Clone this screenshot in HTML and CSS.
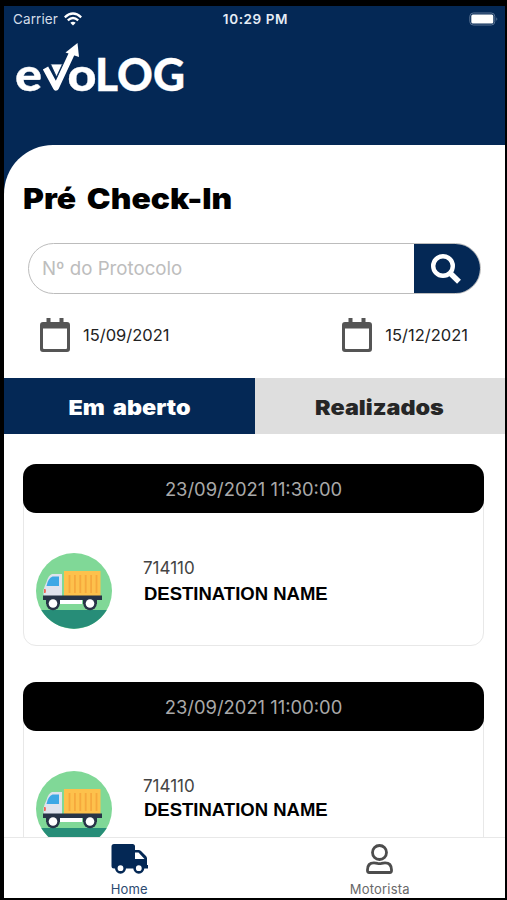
FILE: index.html
```html
<!DOCTYPE html>
<html lang="pt-BR">
<head>
  <meta charset="UTF-8" />
  <meta name="viewport" content="width=device-width, initial-scale=1.0" />
  <title>evoLOG - Pré Check-In</title>
  <link rel="stylesheet" href="styles.css">
</head>
<body>
  <svg class="sprite" aria-hidden="true">
    <symbol id="calendar" viewBox="0 0 30 35">
      <path d="M6.500 0h4v5h-4zM19.500 0h4v5h-4z" fill="#555" />
      <path d="M3 4h24a3 3 0 0 1 3 3v24a3 3 0 0 1-3 3H3a3 3 0 0 1-3-3V7a3 3 0 0 1 3-3zM3 10.500V30q0 1 1 1h22q1 0 1-1V10.500z" fill="#555" fill-rule="evenodd" />
    </symbol>
    <symbol id="truck" viewBox="0 0 76 76">
      <circle cx="38" cy="38" r="38" fill="#80d897" />
      <path d="M5.300 57h65.400a38 38 0 0 1-65.400 0z" fill="#278d78" />
      <path d="M24 43h22v8H24z" fill="#fff" />
      <path d="M28 18h36.500v25H28z" fill="#fdc14c" />
      <path d="M33.500 22v18M38.900 22v18M44.300 22v18M49.700 22v18M55.100 22v18M60.500 22v18" stroke="#f6a83c" stroke-width="1.800" />
      <path d="M16 21h10v22H7.500V37q1-4 3-8 2-7 5.500-8z" fill="#dfe3ed" />
      <path d="M16.500 23.500H23V33H10.500q1.500-8 6-9.500z" fill="#3da8e5" />
      <path d="M8 36h1.500q1 2 0 4H8z" fill="#f0695a" />
      <path d="M7 42.500h59V47H7z" fill="#273447" />
      <path d="M10 46h14v5H10zM47 46h14v5H47z" fill="#273447" />
      <circle cx="17" cy="50.500" r="6.800" fill="#273447" />
      <circle cx="54" cy="50.500" r="6.800" fill="#273447" />
      <circle cx="17" cy="50.500" r="4.300" fill="#fff" />
      <circle cx="54" cy="50.500" r="4.300" fill="#fff" />
    </symbol>
  </svg>

  <div class="screen">
    <header class="header">
      <div class="status-bar">
        <div class="carrier">
          <span>Carrier</span>
          <svg width="18" height="14" viewBox="0 0 18 14" fill="none" stroke="#fff" stroke-width="2.300">
            <path d="M.8 5.300Q9-2.200 17.200 5.300" />
            <path d="M3.800 8.400Q9 3.600 14.200 8.400" />
            <path d="M9 13.500L6.300 10.800Q9 8.500 11.700 10.800z" fill="#fff" stroke="none" />
          </svg>
        </div>
        <span class="time">10:29 PM</span>
        <svg class="battery" width="30" height="14" viewBox="0 0 30 14">
          <rect x=".8" y="1" width="25" height="12" rx="3.500" fill="none" stroke="#5a7394" />
          <rect x="2.300" y="2.500" width="22" height="9" rx="1.500" fill="#fff" />
          <path d="M27.300 5.200q2 1.800 0 3.600z" fill="#5a7394" />
        </svg>
      </div>

      <svg class="logo" width="170" height="54" viewBox="0 0 170 54" role="img" aria-label="evoLOG">
        <g class="logo-text">
          <text x="-1" y="48" font-size="46" textLength="27" lengthAdjust="spacingAndGlyphs">e</text>
          <text x="51.500" y="48" font-size="46" textLength="29" lengthAdjust="spacingAndGlyphs">o</text>
          <text x="79" y="47.500" font-size="45" textLength="90" lengthAdjust="spacingAndGlyphs">LOG</text>
        </g>
        <path d="M29.500 25L40 44.500 56.500 9" fill="none" stroke="#fff" stroke-width="6" stroke-linejoin="round" />
        <path d="M61.500 0L49.500 9.500l13.500 4.500z" fill="#fff" />
        <path d="M34.500 21h12l-6 13z" fill="#fff" stroke="#042855" stroke-width=".8" />
      </svg>
    </header>

    <main class="content">
      <h1><span>Pré Check-In</span></h1>

      <form class="search">
        <input type="text" name="protocolo" placeholder="Nº do Protocolo" />
        <button type="button" aria-label="Buscar">
          <svg width="30" height="30" viewBox="0 0 30 30" fill="none" stroke="#fff">
            <circle cx="12" cy="12" r="9.800" stroke-width="4.400" />
            <path d="M19 19l9 8.700" stroke-width="5.500" />
          </svg>
        </button>
      </form>

      <div class="dates">
        <div class="date">
          <svg width="30" height="35"><use href="#calendar" /></svg>
          <span>15/09/2021</span>
        </div>
        <div class="date">
          <svg width="30" height="35"><use href="#calendar" /></svg>
          <span>15/12/2021</span>
        </div>
      </div>

      <div class="tabs">
        <div class="tab active"><span>Em aberto</span></div>
        <div class="tab"><span>Realizados</span></div>
      </div>

      <div class="list">
        <div class="card">
          <div class="card-header">23/09/2021 11:30:00</div>
          <div class="card-body">
            <svg width="76" height="76"><use href="#truck" /></svg>
            <div class="info">
              <span class="code">714110</span>
              <span class="name">DESTINATION NAME</span>
            </div>
          </div>
        </div>
        <div class="card">
          <div class="card-header">23/09/2021 11:00:00</div>
          <div class="card-body">
            <svg width="76" height="76"><use href="#truck" /></svg>
            <div class="info tight">
              <span class="code">714110</span>
              <span class="name">DESTINATION NAME</span>
            </div>
          </div>
        </div>
      </div>
    </main>

    <nav class="bottom-nav">
      <div class="nav-item active">
        <svg width="37" height="30" viewBox="0 0 37 30">
          <path d="M3 0h18.500a2.500 2.500 0 0 1 2.500 2.500V6h3.500q1.500 0 2.500 1l5 5q1 1 1 2.500v6.500h1v3.500H3A2.500 2.500 0 0 1 .5 22V2.500A2.500 2.500 0 0 1 3 0zM24 8.500V15h9.500L27.500 8.500z" fill="#042855" fill-rule="evenodd" />
          <circle cx="9.500" cy="24.200" r="4.200" fill="#fff" stroke="#042855" stroke-width="2.600" />
          <circle cx="27.800" cy="24.200" r="4.200" fill="#fff" stroke="#042855" stroke-width="2.600" />
        </svg>
        <span>Home</span>
      </div>
      <div class="nav-item">
        <svg width="27" height="30" viewBox="0 0 27 30" fill="none" stroke="#4d4d4d" stroke-width="2.800">
          <circle cx="13.500" cy="8.500" r="7" />
          <path d="M8 18.800q2 0 3.500.5 2 .6 4 0 1.500-.5 3.500-.5 6.500 0 6.500 7v1q0 1.700-1.700 1.700H3.200q-1.700 0-1.700-1.700v-1q0-7 6.500-7z" />
        </svg>
        <span>Motorista</span>
      </div>
    </nav>
  </div>
</body>
</html>
```

FILE: styles.css
```css
* {
  box-sizing: border-box;
}

body {
  margin: 0;
  padding: 6px 2px 2px 4px;
  height: 900px;
  background-color: #000;
  font-family: 'Inter', sans-serif;
  overflow: hidden;
}

svg {
  display: block;
  flex-shrink: 0;
}

.sprite {
  display: none;
}

.screen {
  display: flex;
  flex-direction: column;
  width: 501px;
  height: 892px;
  background-color: #042855;
  overflow: hidden;
}

.header {
  flex: 0 0 139px;
  color: #fff;
}

.status-bar {
  display: grid;
  grid-template-columns: 1fr auto 1fr;
  align-items: center;
  height: 25px;
  padding: 0 6px 0 9px;
  font-size: 13.5px;
}

.carrier {
  display: flex;
  align-items: center;
  gap: 6px;
  letter-spacing: 0.1px;
  color: #d3dce8;
}

.time {
  margin-left: -1px;
  font-weight: 600;
  letter-spacing: 0.6px;
  color: #e6edf5;
}

.battery {
  justify-self: end;
}

.logo {
  margin: 12px 0 0 12px;
  overflow: visible;
}

.logo-text {
  font-family: 'Lato', sans-serif;
  font-weight: 900;
  fill: #fff;
  stroke: #fff;
  stroke-width: 0.3px;
}

.content {
  flex: 1;
  min-height: 0;
  background-color: #fff;
  border-top-left-radius: 49px;
  overflow: hidden;
}

h1 {
  margin: 36px 0 0 19px;
  font-size: 29px;
  font-weight: 900;
  line-height: 36px;
  white-space: nowrap;
  color: #000;
}

h1 span {
  display: inline-block;
  word-spacing: 4px;
  transform: scaleX(1.1);
  transform-origin: left;
}

.search {
  display: flex;
  width: 453px;
  height: 51px;
  margin: 26px 0 0 24px;
  border: 1.5px solid #bcbcbc;
  border-radius: 26px;
  overflow: hidden;
}

.search input {
  flex: 1;
  min-width: 0;
  padding: 0 13px;
  border: none;
  background: none;
  font-family: inherit;
  font-size: 18.7px;
}

.search input::placeholder {
  color: #bdbdbd;
}

.search button {
  display: flex;
  align-items: center;
  justify-content: center;
  width: 66px;
  padding: 0 2px 0 0;
  border: none;
  background-color: #042855;
}

.dates {
  display: flex;
  justify-content: space-between;
  margin: 24px 37px 0 36px;
}

.date {
  display: flex;
  align-items: center;
  gap: 13px;
  font-size: 16.5px;
  line-height: 20px;
  color: #222;
}

.date span {
  padding-bottom: 2px;
}

.tabs {
  display: flex;
  margin-top: 25px;
}

.tab {
  flex: 1;
  height: 56px;
  background-color: #dedede;
  color: #262626;
  font-size: 20.5px;
  font-weight: 900;
  line-height: 59px;
  text-align: center;
}

.tab span {
  display: inline-block;
  word-spacing: 3px;
  transform: scaleX(1.14);
}

.tab.active {
  background-color: #042855;
  color: #fff;
}

.list {
  display: flex;
  flex-direction: column;
  gap: 36px;
  padding: 30px 21px 0 19px;
}

.card {
  height: 182px;
  border: 1px solid #e8e8e8;
  border-radius: 13px;
}

.card-header {
  height: 49px;
  margin: -1px -1px 0;
  border-radius: 13px;
  background-color: #000;
  color: #a9a9a9;
  font-size: 18.4px;
  line-height: 50px;
  text-align: center;
}

.card-body {
  display: flex;
  align-items: flex-start;
  gap: 31px;
  padding: 40px 12px 0;
}

.info {
  display: flex;
  flex-direction: column;
  padding-top: 3px;
}

.code {
  font-size: 17px;
  line-height: 24px;
  color: #444;
}

.name {
  margin-top: 1px;
  padding-left: 1px;
  font-family: 'Liberation Sans', sans-serif;
  font-size: 18.5px;
  font-weight: bold;
  line-height: 26px;
  color: #000;
}

.info.tight .name {
  margin-top: -1px;
}

.bottom-nav {
  display: flex;
  flex: 0 0 61px;
  border-top: 1px solid #e8e8e8;
  background-color: #fff;
}

.nav-item {
  display: flex;
  flex: 1;
  flex-direction: column;
  align-items: center;
  gap: 7px;
  padding-top: 6px;
  color: #686868;
  font-size: 13px;
  letter-spacing: 0.2px;
  line-height: 16px;
}

.nav-item.active {
  color: #2c4a70;
}
```
